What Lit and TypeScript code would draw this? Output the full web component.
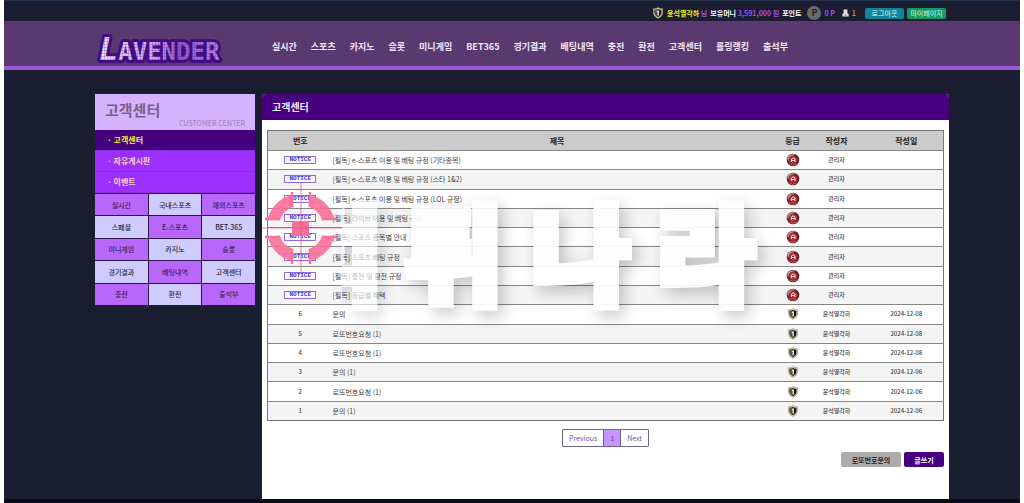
import { LitElement, html, css, svg } from "lit";
import { customElement } from "lit/decorators.js";
import { classMap } from "lit/directives/class-map.js";

const NAV = ["실시간", "스포츠", "카지노", "슬롯", "미니게임", "BET365", "경기결과", "베팅내역", "충전", "환전", "고객센터", "롤링랭킹", "출석부"];
const MENU = ["고객센터", "자유게시판", "이벤트"];
const SHORTCUTS = ["실시간", "국내스포츠", "해외스포츠", "스페셜", "E-스포츠", "BET-365", "미니게임", "카지노", "슬롯", "경기결과", "베팅내역", "고객센터", "충전", "환전", "출석부"];

interface Post {
  no?: number;
  title: string;
  author: string;
  date: string;
}

const notice = (title: string): Post => ({ title: `[필독] ${title}`, author: "관리자", date: "" });
const post = (no: number, title: string, date: string): Post => ({ no, title, author: "윤석열각하", date });

const POSTS: Post[] = [
  notice("e-스포츠 이용 및 베팅 규정 (기타종목)"),
  notice("e-스포츠 이용 및 베팅 규정 (스타 1&2)"),
  notice("e-스포츠 이용 및 베팅 규정 (LOL 규정)"),
  notice("라이브 이용 및 베팅 규정"),
  notice("스포츠 종목별 안내"),
  notice("스포츠 베팅 규정"),
  notice("충전 및 환전 규정"),
  notice("등급별 혜택"),
  post(6, "문의", "2024-12-08"),
  post(5, "로또번호요청 (1)", "2024-12-08"),
  post(4, "로또번호요청 (1)", "2024-12-08"),
  post(3, "문의 (1)", "2024-12-06"),
  post(2, "로또번호요청 (1)", "2024-12-06"),
  post(1, "문의 (1)", "2024-12-06"),
];

const shield = html`<svg class="icon" viewBox="0 0 12 12" width="12" height="12" aria-hidden="true">
  <path d="M1.4 1.6 Q4 1.9 6 .6 Q8 1.9 10.6 1.6 V6 Q10.4 9.6 6 11.6 Q1.6 9.6 1.4 6 Z" fill="#cfc8a4" stroke="#8f8a70" stroke-width=".5"/>
  <path d="M2.6 2.8 Q4.4 2.8 6 1.9 Q7.6 2.8 9.4 2.8 V6 Q9.2 8.8 6 10.3 Q2.8 8.8 2.6 6 Z" fill="#17171b"/>
  <path d="M2.6 2.8 Q4.4 2.8 6 1.9 V10.3 Q2.8 8.8 2.6 6 Z" fill="#55534b"/>
  <path d="M4.8 4.2 L6.2 3.3 H6.9 V8.4 H5.6 V4.9 H4.8 Z" fill="#efeedd"/>
</svg>`;

const medal = html`<svg class="icon" viewBox="0 0 14 14" width="14" height="14" aria-hidden="true">
  <circle cx="7" cy="7" r="6.3" fill="#6d2028"/>
  <path d="M1.2 6 A5.9 5.9 0 0 1 9.6 1.8 Q4 3 3.4 9 Z" fill="#c99a98"/>
  <circle cx="7.2" cy="7.2" r="4.4" fill="#b03038" stroke="#551018" stroke-width=".5"/>
  <path d="M5.4 9 V6 L7.2 4.8 L9 6 V9 M5.4 7.5 H9" fill="none" stroke="#f7dfe0" stroke-width="1"/>
  <path d="M3.4 11 Q7 13.6 10.6 11" fill="none" stroke="#d77a80" stroke-width=".7"/>
</svg>`;

@customElement("lavender-logo")
export class LavenderLogo extends LitElement {
  static styles = css`
    :host { display: block; }
    .mark { display: block; overflow: visible; }
    .word { font-family: "DejaVu Sans Mono", monospace; font-weight: 700; paint-order: stroke; stroke-linejoin: round; }
    .body { font-size: 24px; }
    .initial { font-size: 32px; font-style: italic; }
  `;

  render() {
    return html`<svg class="mark" width="124" height="36" role="img" aria-label="Lavender">
      <defs>
        <linearGradient id="fade" x1="0" x2="1" y1="0" y2="0">
          <stop offset="0" stop-color="#f2e4ff"/>
          <stop offset=".45" stop-color="#c9a4f0"/>
          <stop offset=".62" stop-color="#8e5ccb"/>
          <stop offset="1" stop-color="#b98ae6"/>
        </linearGradient>
        <pattern id="mesh" width="3" height="3" patternUnits="userSpaceOnUse">
          <path d="M0 0 H3 M0 0 V3" stroke="#5a2a98" stroke-opacity=".55" stroke-width="1"/>
        </pattern>
        <pattern id="ink" width="130" height="40" patternUnits="userSpaceOnUse">
          <rect width="130" height="40" fill="url(#fade)"/>
          <rect width="130" height="40" fill="url(#mesh)"/>
        </pattern>
      </defs>
      <text class="word" x="1" y="34" fill="url(#ink)" stroke="#430c82" stroke-width="6"><tspan class="initial">L</tspan><tspan class="body">AVENDER</tspan></text>
    </svg>`;
  }
}

@customElement("board-watermark")
export class BoardWatermark extends LitElement {
  static styles = css`
    :host { display: block; pointer-events: none; }
    .art { display: block; overflow: visible; }
    .letters {
      font-family: "Noto Sans CJK KR", sans-serif;
      font-size: 108px;
      font-weight: 900;
      fill: #fff;
      stroke: #fff;
      stroke-width: 8px;
      opacity: 0.92;
      filter: drop-shadow(5px 6px 8px rgba(0, 0, 0, 0.24));
    }
    .faded { opacity: 0.65; }
  `;

  render() {
    const glyphs: [string, number][] = [["튀", 142], ["나", 269], ["라", 394]];
    return html`<svg class="art" width="500" height="140" aria-hidden="true">
      <defs><clipPath id="edge"><rect x="80" y="0" width="60" height="150"/></clipPath></defs>
      <g clip-path="url(#edge)"><text class="letters faded" x="22" y="114">먹</text></g>
      <g class="letters">${glyphs.map(([glyph, x]) => svg`<text x=${x} y="114">${glyph}</text>`)}</g>
      <g fill="none" stroke="#f9709a" stroke-width="12" stroke-opacity=".9">
        <path d="M12 37 A27 27 0 0 1 30 19"/>
        <path d="M48 19 A27 27 0 0 1 66 37"/>
        <path d="M66 55 A27 27 0 0 1 48 73"/>
        <path d="M30 73 A27 27 0 0 1 12 55"/>
      </g>
      <path d="M3 37 H17 M61 37 H75 M3 55 H17 M61 55 H75 M30 10 V24 M48 10 V24 M30 68 V82 M48 68 V82" stroke="#f9709a" stroke-width="2.4"/>
      <rect x="30" y="39" width="17" height="15" fill="#f9709a"/>
      <path d="M0 46 H80 M39 1 V90" stroke="#e2477a" stroke-width="1" stroke-opacity=".7"/>
    </svg>`;
  }
}

@customElement("app-root")
export class AppRoot extends LitElement {
  static styles = css`
    :host {
      display: block;
      box-sizing: border-box;
      min-height: 100vh;
      padding: 0 4px;
      background: #fff;
      font-family: "Noto Sans CJK KR", "Noto Sans", sans-serif;
      font-size: 7px;
      line-height: 10px;
      color: #444;
    }
    * { box-sizing: border-box; }
    a { color: inherit; text-decoration: none; }
    button { font: inherit; border: 0; padding: 0; cursor: pointer; }
    .page { display: flex; flex-direction: column; min-height: 100vh; background: #1b1d31; border-top: 1px solid #20304a; border-bottom: 4px solid #0b0d18; }
    .icon { display: block; }

    .top { display: flex; align-items: center; justify-content: flex-end; gap: 3px; height: 20px; padding: 4px 74px 0 91px; font-weight: 700; color: #fff; white-space: nowrap; }
    .name { color: #f4f01c; }
    .violet { color: #a64ff0; }
    .orange { color: #c98a4a; }
    .coin { display: grid; place-items: center; width: 14px; height: 14px; margin-left: 3px; border-radius: 50%; background: #6a6a6c; color: #222; font-size: 9px; }
    .people { margin-left: 4px; }
    .pill { height: 11px; width: 39px; border-radius: 2px; font-weight: 400; color: #d8f5f5; }
    .logout { margin-left: 6px; background: #11849a; }
    .mypage { background: #149a62; }

    .head { display: flex; align-items: center; gap: 50px; height: 49px; padding: 0 71px 0 94px; background: #5a3971; border-bottom: 4px solid #9a5bdb; }
    .nav { display: flex; gap: 14px; padding-top: 6px; font-size: 9px; line-height: 14px; font-weight: 700; color: #f3e6f8; white-space: nowrap; }

    .main { flex: 1; display: flex; gap: 7px; padding: 24px 71px 0 91px; }
    .side { flex: none; width: 160px; }
    .side-title { height: 36px; padding: 5px 10px 0; background: #d6b2fd; color: #76618a; }
    .side-title h2 { margin: 0; font-size: 15px; line-height: 22px; font-weight: 700; }
    .side-title p { margin: -3px 0 0; text-align: right; font-weight: 500; color: #a588c2; }
    .menu { margin: 0; padding: 0; list-style: none; font-size: 8px; font-weight: 700; color: #f7cfc4; background: #9b30fe; }
    .menu-item { display: block; padding: 5px 12px; border-bottom: 1px solid #8a2cdf; }
    .menu-item.on { background: #45007e; color: #f6f032; }
    .short { display: grid; grid-template-columns: repeat(3, 1fr); grid-auto-rows: 1fr; gap: 1px; height: 112px; border-top: 1px solid #2a1747; background: #2a1747; font-weight: 500; color: #3b2357; }
    .short a { display: grid; place-items: center; background: #b768fb; }
    .short a:nth-child(even) { background: #cfccfd; color: #26263c; }

    .panel { position: relative; flex: 1; min-width: 0; background: #fff; border-radius: 4px 4px 0 0; }
    .panel-title { margin: 0; padding: 5px 10px 6px; border-radius: 4px 4px 0 0; background: #47007f; color: #f4eafa; font-size: 10px; line-height: 15px; font-weight: 700; }
    .panel-body { padding: 10px 5px 0; }
    .board { width: 100%; height: 291px; border-collapse: collapse; table-layout: fixed; border: 1px solid #777; font-size: 6px; font-weight: 500; text-align: center; }
    .board th { height: 20px; padding: 0; background: #cbcbcb; color: #222; font-size: 8px; font-weight: 700; }
    .board td { height: 19px; padding: 0; border-top: 1px solid #858585; }
    .board tbody tr:nth-child(even) { background: #f4f4f4; }
    .board .subject { text-align: left; font-size: 7px; font-weight: 400; }
    .board .icon { margin: 0 auto; }
    .c-no { width: 65px; }
    .c-grade { width: 22px; }
    .c-author { width: 66px; }
    .c-date { width: 74px; }
    .tag { display: block; width: 32px; margin: 0 auto; border: 1px solid #9068e0; background: #fbf8ff; color: #4632d8; font: 700 6px/6px "Liberation Mono", monospace; }
    .mark { position: absolute; left: 0; top: 88px; }

    .pages { display: flex; width: max-content; margin: 8px auto 0; border: 1px solid #6d6487; border-radius: 1px; color: #6a51b4; }
    .pages a { padding: 3px 6px; line-height: 10px; }
    .pages .cur { border: solid #6d6487; border-width: 0 1px; background: #c795fd; color: #5a3a9c; }
    .actions { display: flex; justify-content: flex-end; gap: 3px; margin-top: 5px; }
    .act { height: 15px; border-radius: 2px; font-weight: 700; }
    .lotto { width: 60px; background: #acacac; color: #262626; }
    .write { width: 40px; background: #47007f; color: #fff; }
  `;

  render() {
    return html`<div class="page">
      <div class="top">
        ${shield}<span><span class="name">윤석열각하</span> <span class="violet">님</span></span>
        <span>보유머니 <span class="violet">3,591,000 원</span></span>
        <span>포인트</span>
        <span class="coin">P</span><span class="violet">0 P</span>
        <svg class="icon people" width="7" height="8" viewBox="0 0 7 8" aria-hidden="true"><path d="M1.6 .5 H5.4 V3.8 H4.8 L6.6 5 V7.5 H.4 V5 L2.2 3.8 H1.6 Z" fill="#e4e4ea"/><path d="M2.5 6 H4.5" stroke="#555"/></svg>
        <span class="orange">1</span>
        <button class="pill logout">로그아웃</button>
        <button class="pill mypage">마이페이지</button>
      </div>
      <header class="head">
        <lavender-logo></lavender-logo>
        <nav class="nav">${NAV.map((label) => html`<a href="#">${label}</a>`)}</nav>
      </header>
      <div class="main">
        <aside class="side">
          <div class="side-title"><h2>고객센터</h2><p>CUSTOMER CENTER</p></div>
          <ul class="menu">
            ${MENU.map((label, i) => html`<li><a href="#" class=${classMap({ "menu-item": true, on: i === 0 })}>· ${label}</a></li>`)}
          </ul>
          <nav class="short">${SHORTCUTS.map((label) => html`<a href="#">${label}</a>`)}</nav>
        </aside>
        <main class="panel">
          <h1 class="panel-title">고객센터</h1>
          <div class="panel-body">
            <table class="board">
              <thead>
                <tr>
                  <th class="c-no">번호</th><th>제목</th><th class="c-grade">등급</th><th class="c-author">작성자</th><th class="c-date">작성일</th>
                </tr>
              </thead>
              <tbody>
                ${POSTS.map((p) => html`<tr>
                  <td>${p.no ?? html`<span class="tag">NOTICE</span>`}</td>
                  <td class="subject"><a href="#">${p.title}</a></td>
                  <td>${p.no ? shield : medal}</td>
                  <td>${p.author}</td>
                  <td>${p.date}</td>
                </tr>`)}
              </tbody>
            </table>
            <nav class="pages"><a href="#">Previous</a><a href="#" class="cur">1</a><a href="#">Next</a></nav>
            <div class="actions">
              <button class="act lotto">로또번호문의</button>
              <button class="act write">글쓰기</button>
            </div>
          </div>
          <board-watermark class="mark"></board-watermark>
        </main>
      </div>
    </div>`;
  }
}
